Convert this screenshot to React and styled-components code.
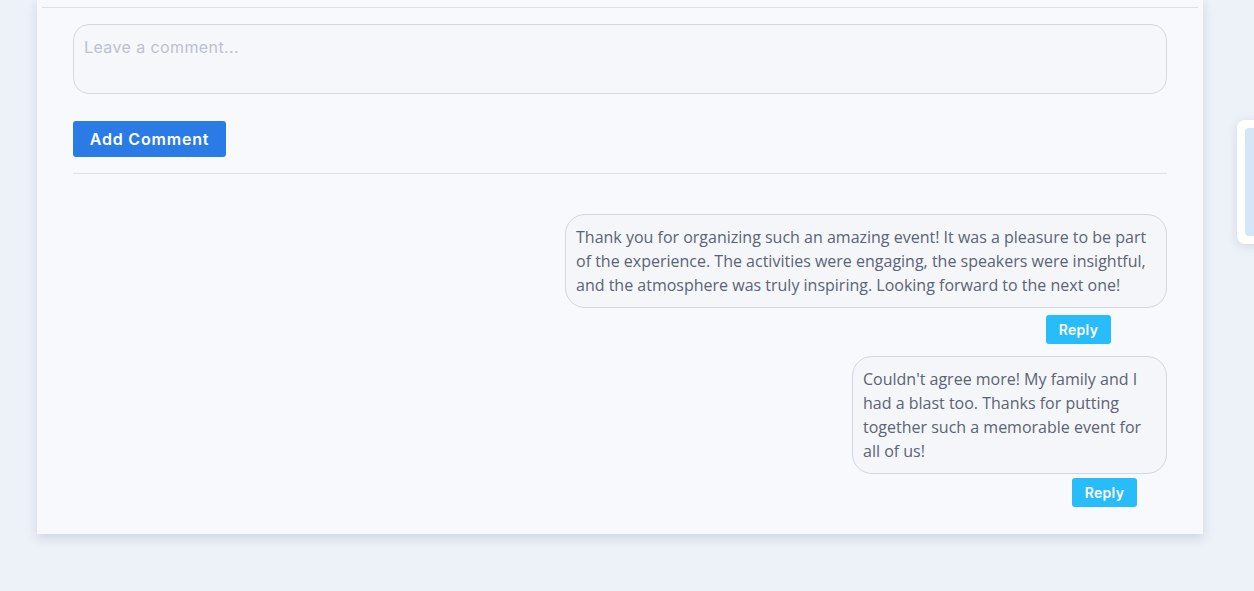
import React from "react";
import styled, { createGlobalStyle } from "styled-components";

const GlobalStyle = createGlobalStyle`
  html, body {
    margin: 0;
    padding: 0;
    background: #edf1f8;
    overflow: hidden;
  }
  * {
    box-sizing: border-box;
  }
`;

const comments = [
  {
    id: 1,
    text: "Thank you for organizing such an amazing event! It was a pleasure to be part of the experience. The activities were engaging, the speakers were insightful, and the atmosphere was truly inspiring. Looking forward to the next one!",
    width: 602,
    replyOffset: 56,
    replyGap: 7,
  },
  {
    id: 2,
    text: "Couldn't agree more! My family and I had a blast too. Thanks for putting together such a memorable event for all of us!",
    width: 315,
    replyOffset: 30,
    replyGap: 4,
  },
];

const App = () => {
  return (
    <Page>
      <GlobalStyle />
      <Card>
        <TopRule />
        <Body>
          <CommentInput placeholder="Leave a comment..." />
          <AddButton>Add Comment</AddButton>
          <Rule />
          <Thread>
            {comments.map((c) => (
              <CommentItem key={c.id}>
                <Bubble $width={c.width}>{c.text}</Bubble>
                <ReplyButton $offset={c.replyOffset} $gap={c.replyGap}>
                  Reply
                </ReplyButton>
              </CommentItem>
            ))}
          </Thread>
        </Body>
      </Card>
      <SideWidget>
        <div className="inner" />
      </SideWidget>
    </Page>
  );
};

export default App;

const Page = styled.div`
  width: 1254px;
  height: 591px;
  padding-left: 37px;
`;

const Card = styled.div`
  width: 1166px;
  background: #f8f9fd;
  box-shadow: 0 4px 10px rgba(150, 160, 185, 0.35);
  padding: 7px 5px 27px;
`;

const TopRule = styled.div`
  height: 1px;
  background: #dde0e7;
`;

const Body = styled.div`
  padding: 16px 31px 0;
  display: flex;
  flex-direction: column;
`;

const CommentInput = styled.textarea`
  width: 100%;
  height: 70px;
  resize: none;
  border: 1px solid #d5d8de;
  border-radius: 16px;
  background: #f6f7fa;
  padding: 12px 10px;
  font-family: Inter, "Open Sans", sans-serif;
  font-size: 16px;
  letter-spacing: 0.4px;
  outline: none;

  &::placeholder {
    color: #bcc1cd;
  }
`;

const AddButton = styled.button`
  align-self: flex-start;
  margin-top: 27px;
  width: 153px;
  height: 36px;
  border: none;
  border-radius: 3px;
  background: #2b7be6;
  color: #fff;
  font-family: Inter, sans-serif;
  font-weight: 600;
  font-size: 16px;
  letter-spacing: 0.8px;
  cursor: pointer;
`;

const Rule = styled.div`
  height: 1px;
  background: #dde0e7;
  margin-top: 16px;
`;

const Thread = styled.div`
  display: flex;
  flex-direction: column;
  align-items: flex-end;
  padding-top: 40px;
  gap: 12px;
`;

const CommentItem = styled.div`
  display: flex;
  flex-direction: column;
  align-items: flex-end;
`;

const Bubble = styled.div`
  width: ${(p) => p.$width}px;
  border: 1px solid #d3d6dd;
  border-radius: 20px;
  background: #f5f6f9;
  padding: 10px;
  font-family: "Open Sans", sans-serif;
  font-size: 16px;
  line-height: 24px;
  color: #5b6376;
`;

const ReplyButton = styled.button`
  margin-top: ${(p) => p.$gap}px;
  margin-right: ${(p) => p.$offset}px;
  width: 65px;
  height: 29px;
  border: none;
  border-radius: 3px;
  background: #29bcfb;
  color: #fff;
  font-family: Inter, sans-serif;
  font-weight: 600;
  font-size: 14px;
  letter-spacing: 0.3px;
  cursor: pointer;
`;

const SideWidget = styled.div`
  position: fixed;
  top: 120px;
  left: 1237px;
  width: 40px;
  height: 124px;
  background: #fff;
  border-radius: 8px;
  padding: 8px;
  box-shadow: 0 2px 10px rgba(150, 160, 185, 0.3);

  .inner {
    width: 100%;
    height: 100%;
    background: #d6e5f8;
    border-radius: 4px;
  }
`;
